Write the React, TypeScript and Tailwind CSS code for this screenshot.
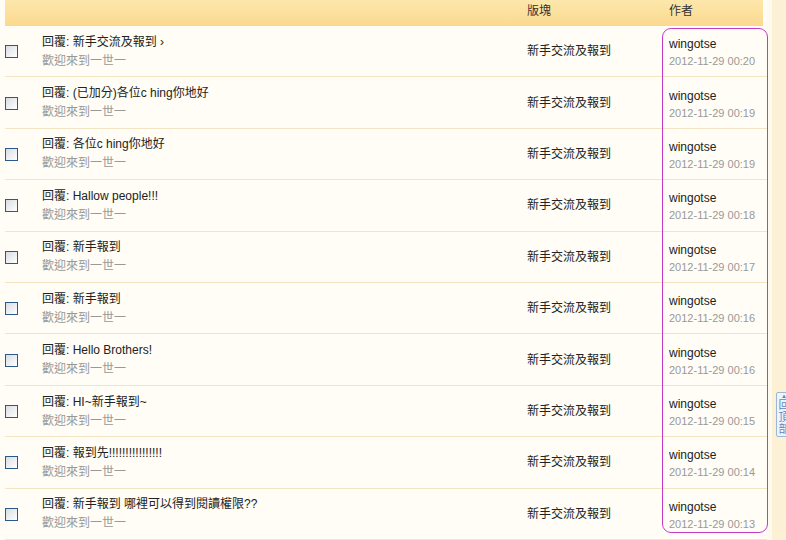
const rows = [
  { title: "回覆: 新手交流及報到 ›", time: "2012-11-29 00:20" },
  { title: "回覆: (已加分)各位c hing你地好", time: "2012-11-29 00:19" },
  { title: "回覆: 各位c hing你地好", time: "2012-11-29 00:19" },
  { title: "回覆: Hallow people!!!", time: "2012-11-29 00:18" },
  { title: "回覆: 新手報到", time: "2012-11-29 00:17" },
  { title: "回覆: 新手報到", time: "2012-11-29 00:16" },
  { title: "回覆: Hello Brothers!", time: "2012-11-29 00:16" },
  { title: "回覆: HI~新手報到~", time: "2012-11-29 00:15" },
  { title: "回覆: 報到先!!!!!!!!!!!!!!!!", time: "2012-11-29 00:14" },
  { title: "回覆: 新手報到 哪裡可以得到閱讀權限??", time: "2012-11-29 00:13" },
];

const font = { fontFamily: '"Liberation Sans", Tahoma, "Noto Sans CJK TC", sans-serif' };

function Checkbox() {
  return (
    <span className="block w-[13px] h-[13px] border border-[#2a5a8a] bg-gradient-to-br from-[#d8dde3] to-[#ffffff]" />
  );
}

export default function App() {
  return (
    <div className="relative w-[786px] h-[540px] overflow-hidden flex bg-[#fffdf5] text-[12px]" style={font}>
      {/* list */}
      <div className="w-[767px] pl-[5px] flex flex-col">
        {/* header */}
        <div className="h-[26px] w-[758px] flex items-start pt-[2px] bg-gradient-to-b from-[#fde7ab] to-[#fbd98f] text-[#333]">
          <div className="w-[522px]" />
          <div className="w-[142px]">版塊</div>
          <div>作者</div>
        </div>

        {rows.map((r, i) => (
          <div key={i} className="h-[51.5px] flex items-center border-b border-[#f3e5c3]">
            <div className="w-[37px] flex items-center pt-[1px]">
              <Checkbox />
            </div>
            <div className="w-[485px] flex flex-col leading-[19px] mt-[1px]">
              <span className="text-[#222]">{r.title}</span>
              <span className="text-[#999]">歡迎來到一世一</span>
            </div>
            <div className="w-[142px] text-[#222]">新手交流及報到</div>
            <div className="flex flex-col leading-[17px] mt-[4px]">
              <span className="text-[#222]">wingotse</span>
              <span className="text-[#999] text-[11px]">{r.time}</span>
            </div>
          </div>
        ))}
      </div>

      {/* right strip */}
      <div className="w-[5px] bg-[#fffaef]" />
      <div className="flex-1 bg-gradient-to-r from-[#fdf1d4] to-[#fcf0d6]" />

      {/* highlight annotation */}
      <div className="absolute left-[662px] top-[28px] w-[106px] h-[505px] rounded-[9px] border-[1.5px] border-[#c23ac6]" />

      {/* back-to-top button */}
      <div className="absolute left-[776px] top-[392px] w-[16px] h-[45px] border border-[#9ab6d9] bg-[#eef4fb] rounded-[2px] flex flex-col items-center text-[#5b87c2] text-[11px] leading-[12px] pt-[1px]">
        <span className="text-[6px] leading-[5px]">▲</span>
        <span>回</span>
        <span>頂</span>
        <span>部</span>
      </div>
    </div>
  );
}
